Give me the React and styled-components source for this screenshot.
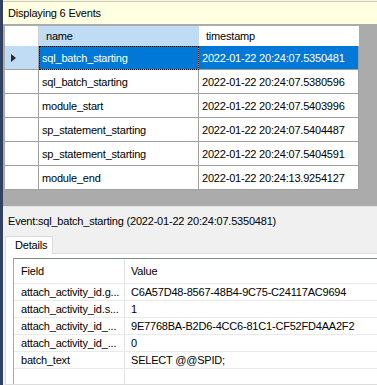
import { Fragment } from "react";
import styled, { createGlobalStyle } from "styled-components";

const GlobalStyle = createGlobalStyle`
  body {
    margin: 0;
    font-family: "Liberation Sans", Arial, sans-serif;
    font-size: 11px;
    letter-spacing: -0.2px;
    color: #000;
    background: #f0f0f0;
  }
`

const Window = styled.div`
  display: flex;
  width: 377px;
  height: 385px;
  overflow: hidden;
`

const SideStrip = styled.div`
  width: 3px;
  flex: none;
  background: #34405f;
`

const Main = styled.div`
  flex: 1;
  display: flex;
  flex-direction: column;
  min-width: 0;
`

const Banner = styled.div`
  height: 22px;
  border-top: 1px solid #f2f2f2;
  box-shadow: inset 0 1px #d3cda4;
  background: #ffffe1;
  display: flex;
  align-items: center;
  padding: 1px 0 0 5px;
`

const GridArea = styled.div`
  height: 180px;
  background: #ababab;
  padding: 2px 0 0 2px;
`

const Grid = styled.div`
  display: grid;
  grid-template-columns: 34px 160px 160px;
  width: 354px;
`

const HeadCell = styled.div`
  height: 20px;
  display: flex;
  align-items: center;
  padding-left: ${p => (p.$corner ? 0 : "7px")};
  background: ${p => (p.$active ? "#bfdcf4" : "#fff")};
  box-sizing: border-box;
  border-right: ${p => (p.$corner ? "1px solid #d0d0d0" : "none")};
`

const RowHead = styled.div`
  height: 24px;
  box-sizing: border-box;
  border-right: 1px solid #a0a0a0;
  border-bottom: 1px solid #a0a0a0;
  background: ${p => (p.$active ? "#bfdcf4" : "#fff")};
  display: flex;
  align-items: center;
  padding-left: 6px;
`

const Arrow = styled.span`
  width: 0;
  height: 0;
  border-left: 5px solid #2a2a2a;
  border-top: 4.5px solid transparent;
  border-bottom: 4.5px solid transparent;
`

const Cell = styled.div`
  height: 24px;
  box-sizing: border-box;
  border-right: 1px solid #a0a0a0;
  border-bottom: 1px solid #a0a0a0;
  display: flex;
  align-items: center;
  padding-left: 3px;
  white-space: nowrap;
  background: ${p => (p.$selected ? "#0078d7" : "#fff")};
  color: ${p => (p.$selected ? "#fff" : "#000")};
  outline: ${p => (p.$focus ? "1px dotted #000" : "none")};
  outline-offset: -1px;
`

const Panel = styled.div`
  flex: 1;
  display: flex;
  flex-direction: column;
  background: #f0f0f0;
  border-top: 1px solid #e4e4e4;
`

const EventLabel = styled.div`
  height: 29px;
  box-sizing: border-box;
  padding: 7px 0 0 5px;
  line-height: 14px;
  white-space: nowrap;
`

const TabStrip = styled.div`
  display: flex;
  padding-left: 2px;
`

const Tab = styled.div`
  width: 48px;
  height: 18px;
  box-sizing: border-box;
  padding: 2px 0 0 9px;
  background: #fff;
  border: 1px solid #dcdcdc;
  border-bottom: none;
  position: relative;
  z-index: 1;
  margin-bottom: -1px;
`

const TabPage = styled.div`
  flex: 1;
  margin-left: 2px;
  background: #fff;
  border: 1px solid #dcdcdc;
  border-right: none;
  padding: 4px 0 0 7px;
  display: flex;
`

const PropGrid = styled.div`
  flex: 1;
  border-top: 1px solid #828790;
  border-left: 1px solid #a8a8a8;
  background: linear-gradient(#e3e3e3, #e3e3e3) 110px 0 / 1px 100% no-repeat, #fff;
`

const PropRow = styled.div`
  display: grid;
  grid-template-columns: 111px 1fr;
  height: ${p => (p.$head ? "25px" : "17px")};
  box-sizing: border-box;
  border-bottom: 1px solid #eaeaea;
  align-items: center;
  white-space: nowrap;
`

const FieldText = styled.span`
  padding-left: 7px;
  overflow: hidden;
`

const ValueText = styled.span`
  padding-left: 6px;
`

const events = [
  ["sql_batch_starting", "2022-01-22 20:24:07.5350481"],
  ["sql_batch_starting", "2022-01-22 20:24:07.5380596"],
  ["module_start", "2022-01-22 20:24:07.5403996"],
  ["sp_statement_starting", "2022-01-22 20:24:07.5404487"],
  ["sp_statement_starting", "2022-01-22 20:24:07.5404591"],
  ["module_end", "2022-01-22 20:24:13.9254127"],
];

const fields = [
  ["attach_activity_id.g...", "C6A57D48-8567-48B4-9C75-C24117AC9694"],
  ["attach_activity_id.s...", "1"],
  ["attach_activity_id_...", "9E7768BA-B2D6-4CC6-81C1-CF52FD4AA2F2"],
  ["attach_activity_id_...", "0"],
  ["batch_text", "SELECT @@SPID;"],
];

function App() {
  return (
    <Window>
      <GlobalStyle />
      <SideStrip />
      <Main>
        <Banner>Displaying 6 Events</Banner>
        <GridArea>
          <Grid>
            <HeadCell $corner />
            <HeadCell $active>name</HeadCell>
            <HeadCell>timestamp</HeadCell>
            {events.map(([name, ts], i) => (
              <Fragment key={i}>
                <RowHead $active={i === 0}>{i === 0 && <Arrow />}</RowHead>
                <Cell $selected={i === 0} $focus={i === 0}>{name}</Cell>
                <Cell $selected={i === 0}>{ts}</Cell>
              </Fragment>
            ))}
          </Grid>
        </GridArea>
        <Panel>
          <EventLabel>Event:sql_batch_starting (2022-01-22 20:24:07.5350481)</EventLabel>
          <TabStrip>
            <Tab>Details</Tab>
          </TabStrip>
          <TabPage>
            <PropGrid>
              <PropRow $head>
                <FieldText>Field</FieldText>
                <ValueText>Value</ValueText>
              </PropRow>
              {fields.map(([f, v], i) => (
                <PropRow key={i}>
                  <FieldText>{f}</FieldText>
                  <ValueText>{v}</ValueText>
                </PropRow>
              ))}
            </PropGrid>
          </TabPage>
        </Panel>
      </Main>
    </Window>
  );
}

export default App;
